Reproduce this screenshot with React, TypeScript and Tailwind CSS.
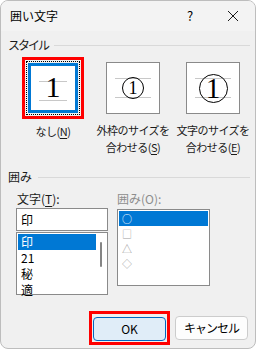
import React from 'react';

const jp = { fontFamily: '"Noto Sans CJK JP", "Noto Sans", sans-serif' };
const serif = { fontFamily: '"Liberation Serif", serif' };

function Lines({ children }: { children: React.ReactNode }) {
  // the two gray guide lines with the sample glyph between them
  return (
    <div className="relative w-full h-full bg-white">
      <div className="absolute left-[8px] right-[8px] top-[15px] h-px bg-[#c8c8c8]" />
      <div className="absolute left-[8px] right-[8px] top-[34px] h-px bg-[#c8c8c8]" />
      <div className="absolute inset-0 flex items-center justify-center">{children}</div>
    </div>
  );
}

function Caption({ top, bottom, u }: { top: string; bottom?: string; u: string }) {
  const last = bottom ?? top;
  const base = last.replace(`(${u})`, '');
  return (
    <div className="text-[11px] leading-[17px] text-center text-[#1a1a1a] tracking-[-0.5px]">
      {bottom && <div>{top}</div>}
      <div>
        {base}(<span className="underline underline-offset-2">{u}</span>)
      </div>
    </div>
  );
}

export default function App() {
  return (
    <div className="w-[257px] h-[351px] bg-white" style={jp}>
      <div className="w-[256px] h-[349px] bg-[#f0f0f0] border border-[#bdbdbd] rounded-lg overflow-hidden flex flex-col">
        {/* title bar */}
        <div className="h-[30px] bg-[#f3f3f3] flex items-center pl-[9px] text-[12px] text-black">
          <span className="flex-1">囲い文字</span>
          <span className="w-[20px] text-center text-[13px] mr-[27px]">?</span>
          <svg width="12" height="12" viewBox="0 0 12 12" className="mr-[16px]">
            <path d="M1 1 L11 11 M11 1 L1 11" stroke="#1a1a1a" strokeWidth="1" />
          </svg>
        </div>

        {/* style group */}
        <div className="flex items-center pl-[7px] pr-[5px] mt-[6px] h-[16px]">
          <span className="text-[12px] tracking-[-2px] text-[#1a1a1a]">スタイル</span>
          <div className="flex-1 h-px bg-[#d9d9d9] ml-[6px]" />
        </div>

        <div className="grid grid-cols-3 pl-[12px] pr-[2px] mt-[4px]">
          <div className="flex flex-col items-center">
            <div className="w-[62px] h-[62px] border-[3px] border-[#ff0000] p-px">
              <div className="w-full h-full border border-dotted border-black p-px">
                <div className="w-full h-full border-[3px] border-[#0078d4]">
                  <Lines>
                    <span className="text-[30px] leading-none mt-[-2px]" style={serif}>1</span>
                  </Lines>
                </div>
              </div>
            </div>
            <div className="mt-[4px]">
              <Caption top="なし(N)" u="N" />
            </div>
          </div>

          <div className="flex flex-col items-center">
            <div className="w-[54px] h-[52px] mt-[5px] border border-[#8a8a8a]">
              <Lines>
                <span className="w-[22px] h-[22px] rounded-full border border-black flex items-center justify-center text-[18px] leading-none" style={serif}>1</span>
              </Lines>
            </div>
            <div className="mt-[8px]">
              <Caption top="外枠のサイズを" bottom="合わせる(S)" u="S" />
            </div>
          </div>

          <div className="flex flex-col items-center">
            <div className="w-[54px] h-[52px] mt-[5px] border border-[#8a8a8a]">
              <Lines>
                <span className="w-[29px] h-[29px] rounded-full border border-black flex items-center justify-center text-[29px] leading-none" style={serif}>1</span>
              </Lines>
            </div>
            <div className="mt-[8px]">
              <Caption top="文字のサイズを" bottom="合わせる(E)" u="E" />
            </div>
          </div>
        </div>

        {/* enclosure group */}
        <div className="flex items-center pl-[7px] pr-[5px] mt-[13px] h-[16px]">
          <span className="text-[12px] text-[#1a1a1a]">囲み</span>
          <div className="flex-1 h-px bg-[#d9d9d9] ml-[6px]" />
        </div>

        <div className="flex pl-[15px] mt-[5px] gap-[9px]">
          <div className="w-[92px]">
            <div className="text-[12px] h-[17px] ml-[1px] text-[#1a1a1a]">
              文字(<span className="underline underline-offset-2">T</span>):
            </div>
            <div className="mt-[1px] h-[23px] border border-[#8a8a8a] bg-white text-[12px] flex items-center pl-[4px]">印</div>
            <div className="mt-px h-[63px] border border-[#8a8a8a] bg-white flex p-px">
              <div className="flex-1 text-[12px] leading-[16px]">
                <div className="bg-[#0078d4] text-white pl-[3px]">印</div>
                <div className="pl-[3px]">21</div>
                <div className="pl-[3px]">秘</div>
                <div className="pl-[3px]">適</div>
              </div>
              <div className="w-[10px] flex justify-center pt-[8px]">
                <div className="w-[2px] h-[25px] bg-[#858585] rounded" />
              </div>
            </div>
          </div>

          <div className="w-[93px]">
            <div className="text-[12px] h-[17px] text-[#8d8d8d]">囲み(O):</div>
            <div className="mt-[2px] h-[77px] border border-[#8a8a8a] bg-white p-px text-[10px] leading-[15px]">
              <div className="bg-[#0078d4] text-white pl-[3px] h-[15px]">○</div>
              <div className="pl-[3px] h-[15px] text-[#a0a0a0]">□</div>
              <div className="pl-[3px] h-[15px] text-[#a0a0a0]">△</div>
              <div className="pl-[3px] h-[15px] text-[#a0a0a0]">◇</div>
            </div>
          </div>
        </div>

        {/* buttons */}
        <div className="flex-1" />
        <div className="flex justify-end items-center gap-[5px] pr-[7px] mb-[3px]">
          <div className="border-[3px] border-[#ff0000] p-px">
            <button className="w-[73px] h-[24px] rounded-[4px] border border-[#0067c0] bg-[#e0edf8] text-[12px] font-normal text-black">OK</button>
          </div>
          <button className="w-[73px] h-[24px] rounded-[4px] border border-[#cccccc] bg-[#fdfdfd] text-[12px] font-normal text-black tracking-[-1px]">キャンセル</button>
        </div>
      </div>
    </div>
  );
}
